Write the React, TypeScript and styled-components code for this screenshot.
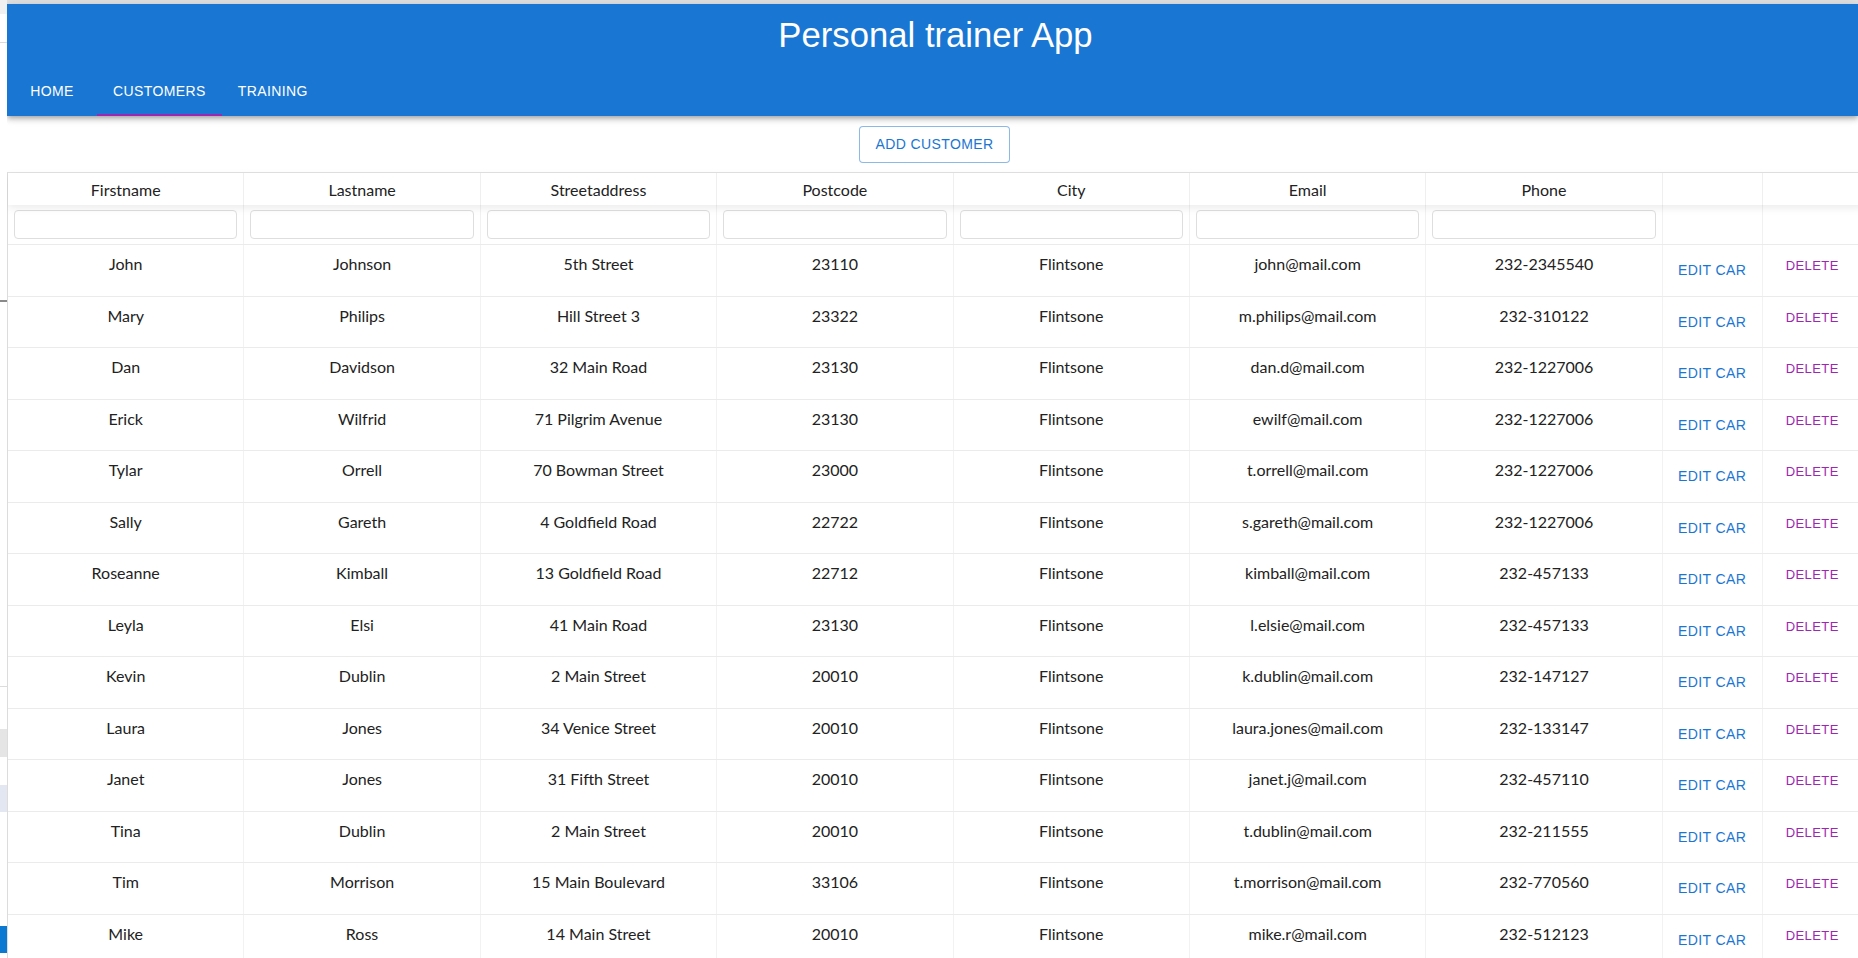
import React from "react";
import styled, { createGlobalStyle } from "styled-components";

const GlobalStyle = createGlobalStyle`
  html, body {
    margin: 0;
    padding: 0;
    background: #ffffff;
    overflow: hidden;
  }
  * { box-sizing: border-box; }
`;

const Page = styled.div`
  display: flex;
  flex-direction: row;
  width: 1858px;
  height: 958px;
  overflow: hidden;
  background: #ffffff;
`;

const SideStrip = styled.div`
  display: flex;
  flex-direction: column;
  width: 7px;
  flex: 0 0 7px;
`;

const StripBlock = styled.div<{ $h: number; $color: string }>`
  height: ${(p) => p.$h}px;
  flex: 0 0 ${(p) => p.$h}px;
  background: ${(p) => p.$color};
`;

const Main = styled.div`
  flex: 1 1 auto;
  min-width: 0;
  display: flex;
  flex-direction: column;
  overflow: hidden;
`;

const TopBar = styled.div`
  height: 4px;
  flex: 0 0 4px;
  background: #e1e1e1;
`;

const AppBar = styled.header`
  position: relative;
  z-index: 2;
  background: #1976d2;
  color: #ffffff;
  display: flex;
  flex-direction: column;
  box-shadow: 0px 2px 4px -1px rgba(0, 0, 0, 0.2),
    0px 4px 5px 0px rgba(0, 0, 0, 0.14), 0px 1px 10px 0px rgba(0, 0, 0, 0.12);
`;

const Title = styled.h1`
  margin: 0;
  padding: 10px 0 12px 6px;
  text-align: center;
  font-family: "Liberation Sans", Arial, sans-serif;
  font-weight: 400;
  font-size: 34.7px;
  line-height: 42px;
`;

const TabList = styled.nav`
  display: flex;
  flex-direction: row;
  height: 48px;
`;

const Tab = styled.div<{ $active?: boolean }>`
  position: relative;
  min-width: 90px;
  padding: 12px 16px;
  display: flex;
  align-items: center;
  justify-content: center;
  font-family: "Liberation Sans", Arial, sans-serif;
  font-size: 14px;
  letter-spacing: 0.4px;
  line-height: 1.25;
  text-transform: uppercase;
  color: #ffffff;
  &::after {
    content: "";
    position: absolute;
    left: 0;
    right: 0;
    bottom: 0;
    height: 2px;
    background: ${(p) => (p.$active ? "#9c27b0" : "transparent")};
  }
`;

const Toolbar = styled.div`
  display: flex;
  justify-content: center;
  padding: 10px 0 9.5px 4px;
`;

const OutlinedButton = styled.button`
  font-family: "Liberation Sans", Arial, sans-serif;
  font-size: 14px;
  font-weight: 400;
  letter-spacing: 0.4px;
  line-height: 1.75;
  text-transform: uppercase;
  color: #1976d2;
  background: #ffffff;
  border: 1px solid rgba(25, 118, 210, 0.5);
  border-radius: 4px;
  padding: 5px 15px;
  cursor: pointer;
`;

const COLS = "repeat(7, 236.4px) 100px 100px";

const Grid = styled.div`
  display: flex;
  flex-direction: column;
  width: max-content;
  border-top: 1px solid #e2e2e2;
  border-left: 1px solid #dcdcdc;
  font-family: Lato, "Open Sans", sans-serif;
  font-size: 16px;
`;

const HeaderRow = styled.div`
  position: relative;
  z-index: 1;
  display: grid;
  grid-template-columns: ${COLS};
  height: 32px;
  background: #ffffff;
  box-shadow: 0 3px 8px rgba(0, 0, 0, 0.08);
`;

const HeaderCell = styled.div`
  border-right: 1px solid #efefef;
  padding-top: 6.5px;
  text-align: center;
  line-height: 20px;
  color: #222222;
`;

const FilterRow = styled.div`
  display: grid;
  grid-template-columns: ${COLS};
  height: 40px;
  border-bottom: 1px solid #ebebeb;
`;

const FilterCell = styled.div`
  border-right: 1px solid #f1f1f1;
  padding: 5px 6px 0;
`;

const FilterInput = styled.input`
  display: block;
  width: 100%;
  height: 29px;
  border: 1px solid #dedede;
  border-radius: 4px;
  background: #ffffff;
  outline: none;
`;

const Row = styled.div`
  display: grid;
  grid-template-columns: ${COLS};
  height: 51.5px;
  flex: 0 0 51.5px;
  border-bottom: 1px solid #ebebeb;
`;

const Cell = styled.div`
  border-right: 1px solid #f2f2f2;
  padding-top: 9px;
  text-align: center;
  line-height: 20px;
  color: #222222;
  white-space: nowrap;
`;

const ActionCell = styled.div<{ $top?: boolean }>`
  border-right: 1px solid #f2f2f2;
  display: flex;
  justify-content: center;
  align-items: ${(p) => (p.$top ? "flex-start" : "center")};
  padding-top: ${(p) => (p.$top ? "6px" : "0")};
`;

const TextButton = styled.button<{ $tone: "primary" | "secondary"; $small?: boolean }>`
  font-family: "Liberation Sans", Arial, sans-serif;
  font-size: ${(p) => (p.$small ? "13px" : "14px")};
  letter-spacing: 0.4px;
  line-height: 1.75;
  text-transform: uppercase;
  color: ${(p) => (p.$tone === "primary" ? "#1976d2" : "#9c27b0")};
  background: transparent;
  border: none;
  border-radius: 4px;
  padding: ${(p) => (p.$small ? "4px 5px" : "6px 8px")};
  cursor: pointer;
`;

const columns = [
  "Firstname",
  "Lastname",
  "Streetaddress",
  "Postcode",
  "City",
  "Email",
  "Phone",
];

const customers: string[][] = [
  ["John", "Johnson", "5th Street", "23110", "Flintsone", "john@mail.com", "232-2345540"],
  ["Mary", "Philips", "Hill Street 3", "23322", "Flintsone", "m.philips@mail.com", "232-310122"],
  ["Dan", "Davidson", "32 Main Road", "23130", "Flintsone", "dan.d@mail.com", "232-1227006"],
  ["Erick", "Wilfrid", "71 Pilgrim Avenue", "23130", "Flintsone", "ewilf@mail.com", "232-1227006"],
  ["Tylar", "Orrell", "70 Bowman Street", "23000", "Flintsone", "t.orrell@mail.com", "232-1227006"],
  ["Sally", "Gareth", "4 Goldfield Road", "22722", "Flintsone", "s.gareth@mail.com", "232-1227006"],
  ["Roseanne", "Kimball", "13 Goldfield Road", "22712", "Flintsone", "kimball@mail.com", "232-457133"],
  ["Leyla", "Elsi", "41 Main Road", "23130", "Flintsone", "l.elsie@mail.com", "232-457133"],
  ["Kevin", "Dublin", "2 Main Street", "20010", "Flintsone", "k.dublin@mail.com", "232-147127"],
  ["Laura", "Jones", "34 Venice Street", "20010", "Flintsone", "laura.jones@mail.com", "232-133147"],
  ["Janet", "Jones", "31 Fifth Street", "20010", "Flintsone", "janet.j@mail.com", "232-457110"],
  ["Tina", "Dublin", "2 Main Street", "20010", "Flintsone", "t.dublin@mail.com", "232-211555"],
  ["Tim", "Morrison", "15 Main Boulevard", "33106", "Flintsone", "t.morrison@mail.com", "232-770560"],
  ["Mike", "Ross", "14 Main Street", "20010", "Flintsone", "mike.r@mail.com", "232-512123"],
];

const strip: [number, string][] = [
  [14, "#f1f1f1"],
  [28, "#ffffff"],
  [1, "#dadada"],
  [257, "#ffffff"],
  [2, "#8a8a8a"],
  [384, "#ffffff"],
  [1, "#dcdcdc"],
  [42, "#ffffff"],
  [28, "#e5e5e5"],
  [28, "#ffffff"],
  [27, "#e3e7f1"],
  [114, "#ffffff"],
  [27, "#0b78d1"],
  [5, "#ffffff"],
];

export default function App() {
  return (
    <>
      <GlobalStyle />
      <Page>
        <SideStrip>
          {strip.map(([h, c], i) => (
            <StripBlock key={i} $h={h} $color={c} />
          ))}
        </SideStrip>
        <Main>
          <TopBar />
          <AppBar>
            <Title>Personal trainer App</Title>
            <TabList>
              <Tab>Home</Tab>
              <Tab $active>Customers</Tab>
              <Tab>Training</Tab>
            </TabList>
          </AppBar>
          <Toolbar>
            <OutlinedButton>Add customer</OutlinedButton>
          </Toolbar>
          <Grid>
            <HeaderRow>
              {columns.map((c) => (
                <HeaderCell key={c}>{c}</HeaderCell>
              ))}
              <HeaderCell />
              <HeaderCell />
            </HeaderRow>
            <FilterRow>
              {columns.map((c) => (
                <FilterCell key={c}>
                  <FilterInput aria-label={`Filter ${c}`} />
                </FilterCell>
              ))}
              <FilterCell />
              <FilterCell />
            </FilterRow>
            {customers.map((r, i) => (
              <Row key={i}>
                {r.map((v, j) => (
                  <Cell key={j}>{v}</Cell>
                ))}
                <ActionCell>
                  <TextButton $tone="primary">Edit car</TextButton>
                </ActionCell>
                <ActionCell $top>
                  <TextButton $tone="secondary" $small>
                    Delete
                  </TextButton>
                </ActionCell>
              </Row>
            ))}
          </Grid>
        </Main>
      </Page>
    </>
  );
}
